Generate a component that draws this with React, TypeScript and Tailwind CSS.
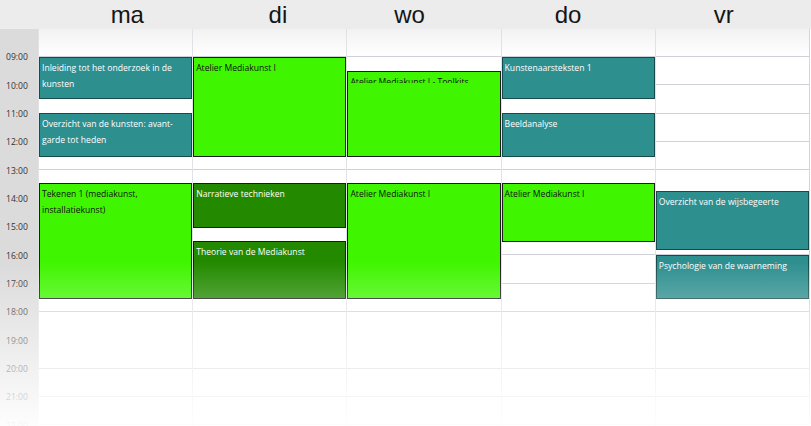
import React from 'react';

type Kind = 'teal' | 'lime' | 'dark';

type Lesson = {
  title: string;
  top: number;
  bottom: number;
  kind: Kind;
  clipped?: boolean;
};

type Day = {
  label: string;
  shift: string;
  lessons: Lesson[];
};

const HOUR = 28.33;

const days: Day[] = [
  {
    label: 'ma',
    shift: 'translate-x-[12px]',
    lessons: [
      { title: 'Inleiding tot het onderzoek in de kunsten', top: 28, bottom: 69, kind: 'teal' },
      { title: 'Overzicht van de kunsten: avant-garde tot heden', top: 84, bottom: 127, kind: 'teal' },
      { title: 'Tekenen 1 (mediakunst, installatiekunst)', top: 154, bottom: 269, kind: 'lime' },
    ],
  },
  {
    label: 'di',
    shift: 'translate-x-[8px]',
    lessons: [
      { title: 'Atelier Mediakunst I', top: 28, bottom: 127, kind: 'lime' },
      { title: 'Narratieve technieken', top: 154, bottom: 198, kind: 'dark' },
      { title: 'Theorie van de Mediakunst', top: 212, bottom: 269, kind: 'dark' },
    ],
  },
  {
    label: 'wo',
    shift: '-translate-x-[15px]',
    lessons: [
      { title: 'Atelier Mediakunst I - Toolkits', top: 42, bottom: 127, kind: 'lime', clipped: true },
      { title: 'Atelier Mediakunst I', top: 154, bottom: 269, kind: 'lime' },
    ],
  },
  {
    label: 'do',
    shift: '-translate-x-[11px]',
    lessons: [
      { title: 'Kunstenaarsteksten 1', top: 28, bottom: 69, kind: 'teal' },
      { title: 'Beeldanalyse', top: 84, bottom: 127, kind: 'teal' },
      { title: 'Atelier Mediakunst I', top: 154, bottom: 212, kind: 'lime' },
    ],
  },
  {
    label: 'vr',
    shift: '-translate-x-[10px]',
    lessons: [
      { title: 'Overzicht van de wijsbegeerte', top: 162, bottom: 220, kind: 'teal' },
      { title: 'Psychologie van de waarneming', top: 226, bottom: 269, kind: 'teal' },
    ],
  },
];

const hours = [9, 10, 11, 12, 13, 14, 15, 16, 17, 18, 19, 20, 21, 22];

const kindStyle: Record<Kind, string> = {
  teal: 'bg-[#2e8f8f] border-[#174a4a] text-white',
  lime: 'bg-[#3ff600] border-[#1c1c1c] text-[#111]',
  dark: 'bg-[#238a00] border-[#1a1a1a] text-white',
};

const Event: React.FC<{ lesson: Lesson }> = ({ lesson }) => (
  <div
    className={`absolute left-0 right-0 border ${kindStyle[lesson.kind]}`}
    style={{ top: lesson.top, height: lesson.bottom - lesson.top + 1 }}
  >
    <div className={lesson.clipped ? 'h-[11px] overflow-hidden' : ''}>
      <p className="px-[2px] pt-[2px] text-[8.6px] leading-[16px]">{lesson.title}</p>
    </div>
  </div>
);

export default function App() {
  return (
    <div className="relative w-[811px] h-[426px] overflow-hidden bg-white font-['Open_Sans',sans-serif]">
      <div className="flex h-[29px] bg-[#ececec]">
        <div className="w-[38px] shrink-0" />
        <div className="grid flex-1 grid-cols-5">
          {days.map((d) => (
            <div key={d.label} className="flex items-center justify-center">
              <span className={`${d.shift} font-['Liberation_Sans',sans-serif] text-[24px] leading-none text-[#151515]`}>
                {d.label}
              </span>
            </div>
          ))}
        </div>
      </div>

      <div className="flex">
        <div className="w-[38px] shrink-0 bg-[#dbdbdb] h-[397px]">
          <div style={{ height: HOUR }} />
          {hours.map((h) => (
            <div key={h} className="relative" style={{ height: HOUR }}>
              <span className="absolute left-[6px] -top-[7px] text-[8.6px] leading-[14px] text-[#333]">
                {String(h).padStart(2, '0')}:00
              </span>
            </div>
          ))}
        </div>

        <div className="grid flex-1 grid-cols-5 border-r border-[#d4d4dc] mr-[1px]">
          {days.map((d) => (
            <div key={d.label} className="relative border-l border-[#e2e2e6] h-[397px]">
              <div className="h-[28px] bg-gradient-to-b from-[#f2f2f2] to-white border-b border-[#d0d0d8]" />
              {hours.map((h) => (
                <div
                  key={h}
                  className={`border-b ${h === 18 ? 'border-transparent' : 'border-[#d0d0d8]'}`}
                  style={{ height: HOUR }}
                />
              ))}
              {d.lessons.map((l) => (
                <Event key={l.title + l.top} lesson={l} />
              ))}
            </div>
          ))}
        </div>
      </div>

      <div className="pointer-events-none absolute left-0 right-0 top-[262px] bottom-0 bg-gradient-to-b from-white/0 to-white/95" />
    </div>
  );
}
